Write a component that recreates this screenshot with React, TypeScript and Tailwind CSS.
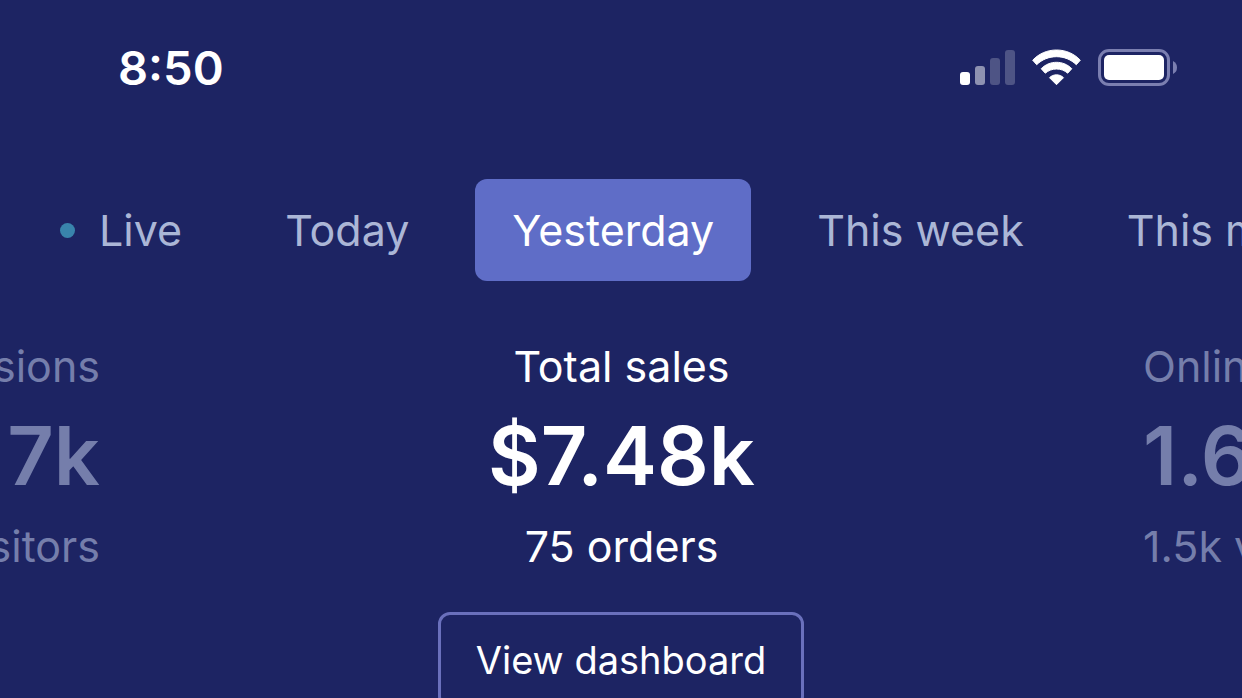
import React from "react";

const periods = ["Live", "Today", "Yesterday", "This week", "This month"];

type MetricProps = {
  label: string;
  value: string;
  detail: string;
  className: string;
};

function StatusBar() {
  return (
    <header className="flex h-[136px] items-center justify-between pr-16 pl-[118px]">
      <time className="text-[47px] font-semibold">8:50</time>
      <div className="flex items-center gap-4">
        <svg width="56" height="36" viewBox="0 0 56 36" fill="white" role="img" aria-label="Signal">
          <rect x="0" y="22" width="10" height="13" rx="3" />
          <rect x="15" y="16" width="10" height="19" rx="3" opacity=".5" />
          <rect x="30" y="8" width="10" height="27" rx="3" opacity=".22" />
          <rect x="45" y="0" width="10" height="35" rx="3" opacity=".22" />
        </svg>
        <svg width="50" height="38" viewBox="0 -1 50 38" fill="white" stroke="white" strokeWidth="1" strokeLinejoin="round" role="img" aria-label="Wi-Fi">
          <path d="M.7 10.200C7 3.500 15.500 0 24.500 0S42 3.500 48.300 10.200L44.300 14.700C39 9.500 32 6.700 24.500 6.700S10 9.500 4.700 14.700Z" />
          <path d="M9.200 18.700C13.500 14.400 18.800 12.300 24.500 12.300S35.500 14.400 39.800 18.700L35.700 23.200C32.500 20.400 28.700 19 24.500 19S16.500 20.400 13.300 23.200Z" />
          <path d="M17.500 27.700C19.500 25.700 22 24.800 24.500 24.800S29.500 25.700 31.500 27.700L24.500 34.700Z" />
        </svg>
        <svg width="80" height="38" viewBox="0 0 80 38" role="img" aria-label="Battery">
          <rect x="1.500" y="1.500" width="69" height="34" rx="9.500" fill="none" stroke="#7b7fb0" strokeWidth="3" />
          <rect x="6" y="6" width="60" height="25" rx="5" fill="white" />
          <path d="M75 12Q79 14 79 18.500T75 25Z" fill="#7b7fb0" />
        </svg>
      </div>
    </header>
  );
}

function Metric({ label, value, detail, className }: MetricProps) {
  return (
    <article className={`flex flex-col gap-[13px] whitespace-nowrap ${className}`}>
      <h2 className="text-[43px] leading-[52px]">{label}</h2>
      <p className="text-[81px] leading-[102px] font-semibold">{value}</p>
      <p className="text-[43px] leading-[52px]">{detail}</p>
    </article>
  );
}

export default function App() {
  return (
    <main className="h-screen overflow-hidden bg-[#1d2463] font-[Inter,sans-serif] text-white">
      <StatusBar />
      <nav aria-label="Period" className="mt-[43px] flex gap-[29px] pl-[60px] text-[43px] whitespace-nowrap text-[#abb6d6]">
        {periods.map((period) => (
          <button
            key={period}
            className="flex h-[102px] shrink-0 items-center rounded-xl px-[37px] first:gap-6 first:pl-0 aria-pressed:bg-[#5f6dc7] aria-pressed:text-white"
            aria-pressed={period === "Yesterday"}
          >
            {period === "Live" && <span className="size-[15px] rounded-full bg-[#3984ac]" />}
            {period}
          </button>
        ))}
      </nav>
      <section aria-label="Metrics" className="mt-[59px] grid grid-cols-[100px_1fr_99px]">
        <Metric label="Sessions" value="7k" detail="1.5k visitors" className="items-end text-[#757eab]" />
        <Metric label="Total sales" value="$7.48k" detail="75 orders" className="items-center" />
        <Metric label="Online store" value="1.6k" detail="1.5k visitors" className="items-start text-[#757eab]" />
      </section>
      <div className="mt-10 flex justify-center">
        <button className="h-24 rounded-xl border-3 border-[#6a70bc] px-[35px] text-[38px]">View dashboard</button>
      </div>
    </main>
  );
}
